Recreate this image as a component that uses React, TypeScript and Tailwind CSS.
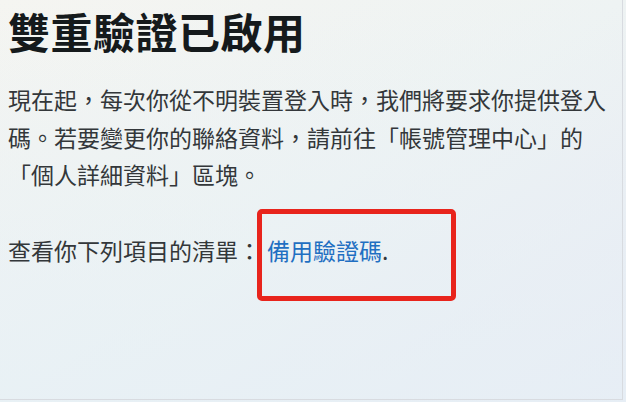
export default function App() {
  const cjk = { fontFamily: '"Noto Sans CJK TC", "Noto Sans CJK SC", sans-serif' };
  return (
    <div
      className="relative w-[626px] h-[402px] overflow-hidden bg-gradient-to-br from-[#f5f5f1] via-[#eef3f3] to-[#e8e9f3]"
      style={cjk}
    >
      <div className="absolute inset-0 bg-gradient-to-t from-[#e6f0f6]/70 to-transparent" />
      <div className="relative px-[8px]">
        <h1 className="text-[42px] leading-[62px] font-bold text-[#151a1c] tracking-[0.5px]">
          雙重驗證已啟用
        </h1>
        <p className="mt-[19px] text-[23px] leading-[37.5px] text-[#33373a]">
          現在起，每次你從不明裝置登入時，我們將要求你提供登入碼。若要變更你的聯絡資料，請前往「帳號管理中心」的「個人詳細資料」區塊。
        </p>
        <p className="mt-[38px] text-[23px] leading-[37.5px] text-[#33373a]">
          查看你下列項目的清單：<a className="text-[#1f6fc2] ml-[6px]">備用驗證碼</a>.
        </p>
      </div>
      <div className="absolute left-[257px] top-[209px] w-[199px] h-[92px] border-[5px] border-[#e8241c] rounded-[5px]" />
      <div className="absolute right-[3px] top-0 bottom-[2px] w-px bg-[#d8dbe0]" />
      <div className="absolute left-0 right-[3px] bottom-[2px] h-px bg-[#d8dbe0]" />
    </div>
  );
}
